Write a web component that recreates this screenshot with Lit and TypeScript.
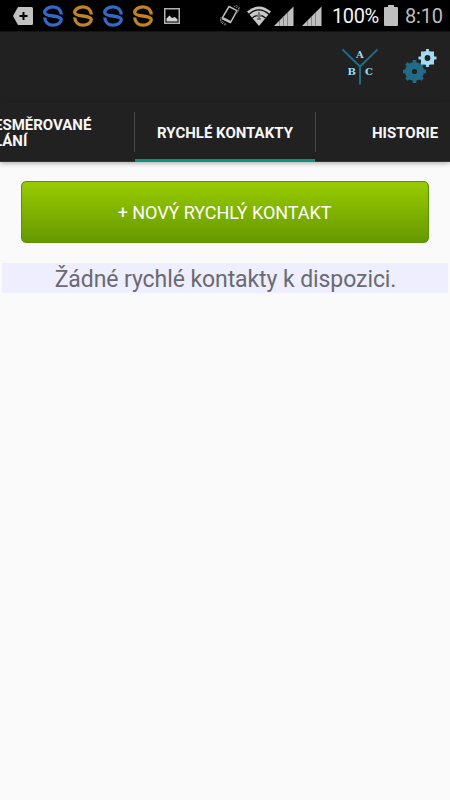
import { LitElement, html, css, svg } from "lit";
import { customElement } from "lit/decorators.js";

const swirl = (color: string) => html`<svg class="swirl" width="20" height="22" viewBox="0 0 20 22" fill="none" stroke=${color} stroke-width="3.3">
  <path d="M18.3 9.5C18 4.8 14.8 1.8 10 1.8C5 1.8 1.7 4.8 1.7 7.4C1.7 9.4 4.5 10.2 10 11C15.5 11.8 18.3 12.6 18.3 14.6C18.3 17.2 15 20.2 10 20.2C5.2 20.2 2 17.2 1.7 12.5"/>
</svg>`;

const signal = (cls: string) => html`<svg class=${cls} width="20" height="20" viewBox="0 0 20 20">
  <path d="M0 20L19.5 .5V20Z" fill="#bfbfbf"/>
  <path d="M5.5 15V20M9.5 11V20M13.5 7V20" stroke="#858585"/>
</svg>`;

const gear = (x: number, y: number, r: number, hole: number, body: number, angles: number[], color: string) => svg`<g transform="translate(${x} ${y})" fill=${color}>
  ${angles.map(a => svg`<rect x=${-r * 0.16} y=${-r} width=${r * 0.32} height=${r * 2} transform="rotate(${a})"/>`)}
  <circle r=${body}/><circle r=${hole} fill="#212121"/></g>`;

@customElement("app-root")
export class AppRoot extends LitElement {
  static styles = css`
    :host { display: flex; flex-direction: column; height: 800px; width: 450px; overflow: hidden; background: #fafafa; font-family: Roboto, sans-serif; }
    svg { display: block; flex: none; }
    .status { height: 31px; flex: none; background: #000; display: flex; align-items: center; padding-left: 13px; border-bottom: 1px solid #171416; }
    .swirl { margin-left: 10px; }
    .picture { margin-left: 11px; }
    .rotate { margin-left: 40px; }
    .wifi { margin-left: 7px; }
    .sig1 { margin-left: 3px; }
    .sig2 { margin-left: 8px; }
    .pct { margin-left: 10px; width: 48px; font-size: 20px; line-height: 31px; color: #f4f4f4; letter-spacing: -.4px; white-space: nowrap; padding-top: 2px; }
    .battery { margin-left: 4px; margin-top: -1px; }
    .clock { margin-left: 7px; font-size: 20px; line-height: 31px; color: #bdbdbd; letter-spacing: -.2px; padding-top: 2px; white-space: nowrap; }
    .bar { height: 70px; flex: none; background: #212121; display: flex; justify-content: flex-end; align-items: center; gap: 24px; padding-right: 13px; box-sizing: border-box; }
    .abc text { font: bold 10px "DejaVu Serif", serif; fill: #9cdcf5; }
    .tabs { height: 60px; flex: none; background: #212121; display: flex; box-shadow: 0 1px 5px rgba(0,0,0,.35); color: #f7f7f7; font-weight: 700; font-size: 15px; line-height: 16px; box-sizing: border-box; }
    .tab { box-sizing: border-box; display: flex; align-items: center; height: 60px; white-space: nowrap; border-bottom: 1px solid #3b3335; flex: none; padding-top: 2px; }
    .prev { width: 135px; }
    .prev span { margin-left: -6px; }
    .active { width: 180px; justify-content: center; border-bottom: 3px solid #0c9181; padding-top: 4px; }
    .next { width: 135px; padding-left: 57px; }
    .rule { width: 1px; height: 40px; margin: 10px 0 0 -1px; background: #484848; flex: none; z-index: 1; }
    .rule.after { margin: 10px -1px 0 0; }
    main { padding: 19px 2px 0; }
    .new { display: flex; align-items: center; justify-content: center; width: 408px; height: 62px; margin: 0 0 0 19px; border: 1px solid #5a9600; border-radius: 5px; background: linear-gradient(#99cc00, #669900); box-shadow: inset 0 0 1px 0 #5a9600; color: #fff; font: 18px Roboto, sans-serif; letter-spacing: -.06px; padding: 1px 1px 0 0; box-sizing: border-box; }
    .empty { margin: 20px 0 0; height: 30px; line-height: 33px; background: #eeeeff; color: #6a6a70; font-size: 23px; letter-spacing: -.08px; text-align: center; text-indent: 1px; white-space: nowrap; }
  `;

  render() {
    return html`
      <div class="status">
        <svg width="20" height="18" viewBox="0 0 20 18"><path d="M5 0H18.5Q20 0 20 1.5V16.5Q20 18 18.5 18H5L0 9Z" fill="#c2c2c2"/><path d="M10.5 5V13M6.5 9H14.5" stroke="#000" stroke-width="2"/></svg>
        ${["#3469c9", "#c28422", "#3469c9", "#c28422"].map(swirl)}
        <svg class="picture" width="16" height="16" viewBox="0 0 16 16"><rect x=".75" y=".75" width="14.5" height="14.5" fill="none" stroke="#b2b2b2" stroke-width="1.5"/><path d="M2.5 13.5V10.5L5.5 7.5L8 10L11 9L13.5 11.5V13.5Z" fill="#d2d2d2"/></svg>
        <svg class="rotate" width="20" height="21" viewBox="0 0 20 21" fill="none" stroke="#bdbdbd"><path d="M9 1.5L16 5.2Q17 5.8 16.4 6.8L10.5 17.5L3 14Q2 13.4 2.6 12.4Z" stroke-width="1.5"/><path d="M3 13.2L10.5 17" stroke-width="2.4"/><path d="M14 1L18.5 3.5L16.5 8.5M15.5 0L19.5 2.5L18 7M1 12L.8 15.5L6.5 19.5M.2 14.5L1.5 18L6 20.5" stroke="#8c8c8c" stroke-dasharray="1.5 .7"/></svg>
        <svg class="wifi" width="24" height="20" viewBox="0 0 24 20"><path d="M0 5.6Q12-4.8 24 5.6L12 20Z" fill="#c8c8c8"/><path d="M2 8.2Q12-.6 22 8.2M5.4 12Q12 6.2 18.6 12" fill="none" stroke="#000" stroke-width="1.2"/><path d="M12 6V14M9.5 10H14.5M10 13H14" stroke="#777" stroke-width="1.8"/></svg>
        ${signal("sig1")}${signal("sig2")}
        <span class="pct">100%</span>
        <svg class="battery" width="14" height="21" viewBox="0 0 14 21"><path d="M4 0H10V2H13Q14 2 14 3V20Q14 21 13 21H1Q0 21 0 20V3Q0 2 1 2H4Z" fill="#bfbfbf"/></svg>
        <span class="clock">8:10</span>
      </div>
      <div class="bar">
        <svg class="abc" width="38" height="38" viewBox="0 0 38 38"><path d="M1.5 1.5L19 18.5L36.5 1.5M19 18V36.5" fill="none" stroke="#1f6a88" stroke-width="2"/><text x="15" y="10">A</text><text x="6.5" y="27">B</text><text x="24" y="27">C</text></svg>
        <svg width="34" height="36" viewBox="0 0 34 36">${gear(11.5, 22.5, 11.5, 2.6, 9.6, [0, 45, 90, 135], "#216a88")}${gear(24.5, 9, 9, 2.9, 7, [0, 90], "#a2dcf5")}<rect x="18.8" y="3.3" width="11.4" height="11.4" fill="none" stroke="#a2dcf5" stroke-width="1.6"/></svg>
      </div>
      <div class="tabs">
        <div class="tab prev"><span>ESMĚROVANÉ<br>LÁNÍ</span></div>
        <div class="rule"></div>
        <div class="tab active">RYCHLÉ KONTAKTY</div>
        <div class="rule after"></div>
        <div class="tab next">HISTORIE</div>
      </div>
      <main>
        <button class="new">+ NOVÝ RYCHLÝ KONTAKT</button>
        <div class="empty">Žádné rychlé kontakty k dispozici.</div>
      </main>`;
  }
}
